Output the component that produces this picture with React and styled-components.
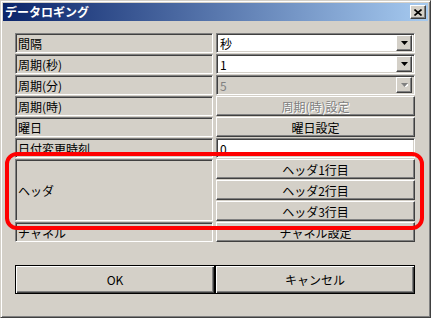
import React from "react";
import styled, { createGlobalStyle, css } from "styled-components";

const Global = createGlobalStyle`
  html, body { margin: 0; padding: 0; background: #d4d0c8; }
  body { font-family: "Noto Sans CJK JP", "DejaVu Sans", sans-serif; font-size: 12px; }
`;

const Window = styled.div`
  position: relative;
  width: 431px;
  height: 318px;
  box-sizing: border-box;
  background: #d4d0c8;
  border-left: 1px solid #d4d0c8;
  border-top: 1px solid #d4d0c8;
  border-right: 1px solid #404040;
  border-bottom: 1px solid #404040;
  box-shadow: inset 1px 1px 0 #ffffff, inset -1px -1px 0 #808080;
  padding: 2px;
  display: flex;
  flex-direction: column;
`;

const TitleBar = styled.div`
  height: 18px;
  background: linear-gradient(to right, #0a246a, #a6caf0);
  display: flex;
  align-items: center;
  justify-content: space-between;
  padding: 0 2px 0 2px;
`;

const Title = styled.span`
  color: #fff;
  font-weight: bold;
  font-size: 12px;
  line-height: 18px;
`;

const CloseBtn = styled.div`
  width: 16px;
  height: 14px;
  box-sizing: border-box;
  background: #d4d0c8;
  border-top: 1px solid #fff;
  border-left: 1px solid #fff;
  border-right: 1px solid #404040;
  border-bottom: 1px solid #404040;
  box-shadow: inset -1px -1px 0 #808080;
  display: flex;
  align-items: center;
  justify-content: center;
`;

const Body = styled.div`
  flex: 1;
  padding: 12px 13px 0 12px;
  display: flex;
  flex-direction: column;
`;

const Grid = styled.div`
  display: grid;
  grid-template-columns: 198px 199px;
  column-gap: 3px;
  row-gap: 1px;
  grid-auto-rows: 20px;
`;

const sunken = css`
  box-sizing: border-box;
  border-top: 1px solid #808080;
  border-left: 1px solid #808080;
  border-right: 1px solid #fff;
  border-bottom: 1px solid #fff;
  box-shadow: inset 1px 1px 0 #404040, inset -1px -1px 0 #d4d0c8;
`;

const Label = styled.div`
  ${sunken}
  grid-row: span ${(p) => p.$span || 1};
  background: #d4d0c8;
  display: flex;
  align-items: center;
  padding-left: 2px;
  color: #000;
  white-space: nowrap;
  overflow: hidden;
`;

const Field = styled.div`
  ${sunken}
  background: ${(p) => (p.$disabled ? "#d4d0c8" : "#fff")};
  display: flex;
  align-items: center;
  justify-content: space-between;
  padding: 2px 2px 2px 3px;
  color: ${(p) => (p.$disabled ? "#808080" : "#000")};
`;

const raised = css`
  box-sizing: border-box;
  background: #d4d0c8;
  border-top: 1px solid #fff;
  border-left: 1px solid #fff;
  border-right: 1px solid #404040;
  border-bottom: 1px solid #404040;
  box-shadow: inset -1px -1px 0 #808080;
`;

const DropBtn = styled.div`
  ${raised}
  width: 16px;
  height: 16px;
  display: flex;
  align-items: center;
  justify-content: center;
`;

const CellButton = styled.div`
  ${raised}
  display: flex;
  align-items: center;
  justify-content: center;
  color: ${(p) => (p.$disabled ? "#808080" : "#000")};
  text-shadow: ${(p) => (p.$disabled ? "1px 1px 0 #fff" : "none")};
`;

const Stack = styled.div`
  grid-row: span 3;
  display: grid;
  grid-template-rows: repeat(3, 1fr);
  row-gap: 1px;
`;

const Footer = styled.div`
  display: grid;
  grid-template-columns: 200px 200px;
  margin-top: 23px;
  height: 29px;
`;

const DialogButton = styled.div`
  box-sizing: border-box;
  border: 1px solid #000;
  background: #d4d0c8;
  box-shadow: inset 1px 1px 0 #fff, inset -1px -1px 0 #404040, inset -2px -2px 0 #808080;
  display: flex;
  align-items: center;
  justify-content: center;
  color: #000;
`;

const Highlight = styled.div`
  position: absolute;
  left: 4px;
  top: 151px;
  width: 419px;
  height: 78px;
  box-sizing: border-box;
  border: 4px solid #ff0000;
  border-radius: 12px;
  pointer-events: none;
`;

const Arrow = ({ disabled }) => (
  <svg width="7" height="4" viewBox="0 0 7 4">
    {disabled && <path d="M1 1h7l-3.5 4z" fill="#fff" />}
    <path d="M0 0h7l-3.5 4z" fill={disabled ? "#808080" : "#000"} />
  </svg>
);

const Combo = ({ value, disabled }) => (
  <Field $disabled={disabled}>
    <span>{value}</span>
    <DropBtn>
      <Arrow disabled={disabled} />
    </DropBtn>
  </Field>
);

export default function App() {
  return (
    <>
      <Global />
      <Window>
        <TitleBar>
          <Title>データロギング</Title>
          <CloseBtn>
            <svg width="8" height="7" viewBox="0 0 8 7">
              <path d="M0.5 0.5l7 6M7.5 0.5l-7 6" stroke="#000" strokeWidth="1.6" />
            </svg>
          </CloseBtn>
        </TitleBar>
        <Body>
          <Grid>
            <Label>間隔</Label>
            <Combo value="秒" />
            <Label>周期(秒)</Label>
            <Combo value="1" />
            <Label>周期(分)</Label>
            <Combo value="5" disabled />
            <Label>周期(時)</Label>
            <CellButton $disabled>周期(時)設定</CellButton>
            <Label>曜日</Label>
            <CellButton>曜日設定</CellButton>
            <Label>日付変更時刻</Label>
            <Field>
              <span>0</span>
            </Field>
            <Label $span={3}>ヘッダ</Label>
            <Stack>
              <CellButton>ヘッダ1行目</CellButton>
              <CellButton>ヘッダ2行目</CellButton>
              <CellButton>ヘッダ3行目</CellButton>
            </Stack>
            <Label>チャネル</Label>
            <CellButton>チャネル設定</CellButton>
          </Grid>
          <Footer>
            <DialogButton>OK</DialogButton>
            <DialogButton>キャンセル</DialogButton>
          </Footer>
        </Body>
        <Highlight />
      </Window>
    </>
  );
}
